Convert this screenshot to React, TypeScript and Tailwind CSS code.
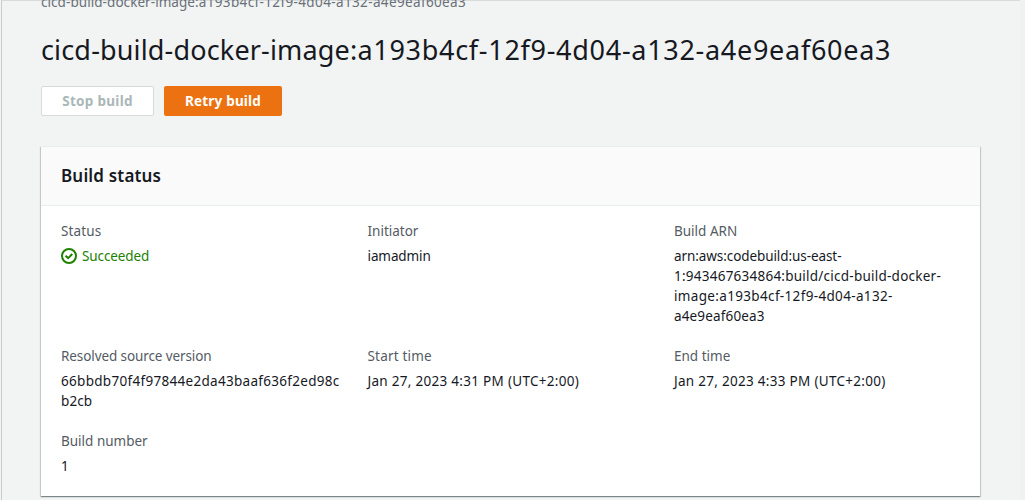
import React from "react";

type FieldProps = { label: string; labelClass?: string; children: React.ReactNode };

function Field({ label, labelClass = "", children }: FieldProps) {
  return (
    <div>
      <div className={`text-[#545b64] ${labelClass}`}>{label}</div>
      <div className="mt-[5px]">{children}</div>
    </div>
  );
}

function SuccessIcon() {
  return (
    <svg className="mt-0.5 size-4" viewBox="0 0 16 16" fill="none" stroke="#1d8102" strokeWidth="2">
      <circle cx="8" cy="8" r="7" />
      <path d="M4.5 7.7 7.1 10.1 11.3 6" />
    </svg>
  );
}

const project = "cicd-build-docker-image:";
const runId = "a193b4cf-12f9-4d04-a132-a4e9eaf60ea3";

export default function App() {
  return (
    <div className="flex h-[500px] w-[1025px] overflow-hidden bg-[#f2f3f3] pl-px font-['Noto_Sans',sans-serif] text-[13.5px] leading-5 text-[#16191f]">
      <main className="w-[1019px] border-l border-t border-l-[#c8cccc] border-t-[#d8dbdb] pl-[39px]">
        <div className="-mt-[9px] h-5 whitespace-nowrap text-[#687078]">
          <span className="tracking-[0.06px]">{project}</span>
          <span className="tracking-[0.37px]">{runId}</span>
        </div>
        <h1 className="mt-5 h-9 whitespace-nowrap text-[27px] leading-9">
          <span className="tracking-[0.16px]">{project}</span>
          <span className="tracking-[0.71px]">{runId}</span>
        </h1>
        <div className="mt-[18px] flex gap-2.5 font-bold">
          <button className="h-[30px] w-[113px] rounded-xs border border-[#d5dbdb] bg-white tracking-[0.3px] text-[#aab7b8]">Stop build</button>
          <button className="h-[30px] w-[118px] rounded-xs bg-[#ec7211] tracking-[0.2px] text-white">Retry build</button>
        </div>
        <section className="mt-[30px] h-[350px] w-[939px] border-t border-[#eaeded] bg-white shadow-[0_1px_1px_0_rgba(0,28,36,0.3),1px_1px_1px_0_rgba(0,28,36,0.15),-1px_1px_1px_0_rgba(0,28,36,0.15)]">
          <header className="h-[59px] border-b border-[#eaeded] bg-[#fafafa] px-5 pt-4">
            <h2 className="text-[17px] font-semibold leading-[26px] tracking-[0.17px]">Build status</h2>
          </header>
          <div className="grid grid-cols-[306.5px_306.5px_306px] gap-y-5 pl-5 pt-[15px]">
            <Field label="Status" labelClass="tracking-[0.15px]">
              <span className="flex gap-[5px] tracking-[-0.1px] text-[#1d8102]"><SuccessIcon />Succeeded</span>
            </Field>
            <Field label="Initiator"><span className="tracking-[-0.1px]">iamadmin</span></Field>
            <Field label="Build ARN">
              <span className="block tracking-[-0.08px]">arn:aws:codebuild:us-east-</span>
              <span className="block tracking-[0.24px]">1:943467634864:build/cicd-build-docker-</span>
              <span className="block tracking-[0.34px]">image:a193b4cf-12f9-4d04-a132-</span>
              <span className="block tracking-[0.15px]">a4e9eaf60ea3</span>
            </Field>
            <Field label="Resolved source version" labelClass="tracking-[-0.1px]">
              <span className="block tracking-[0.3px]">66bbdb70f4f97844e2da43baaf636f2ed98c</span>
              <span className="block tracking-[0.1px]">b2cb</span>
            </Field>
            <Field label="Start time" labelClass="tracking-[0.2px]">
              <span className="tracking-[0.29px]">Jan 27, 2023 4:31 PM (UTC+2:00)</span>
            </Field>
            <Field label="End time">
              <span className="tracking-[0.29px]">Jan 27, 2023 4:33 PM (UTC+2:00)</span>
            </Field>
            <Field label="Build number">1</Field>
          </div>
        </section>
      </main>
      <div className="w-[5px] bg-[#f1f1f1]" />
    </div>
  );
}
